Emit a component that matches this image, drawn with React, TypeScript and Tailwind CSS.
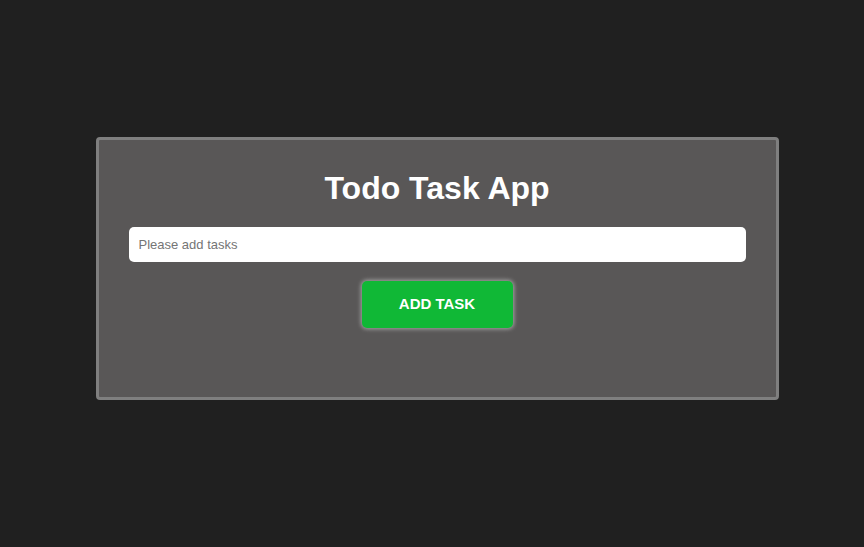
const App = () => {
  return (
    <div className="min-h-screen w-full bg-[#202020] pt-[137px] pl-[10px] flex justify-center items-start font-['Liberation_Sans',Arial,sans-serif]">
      <div className="w-[683px] h-[263px] bg-[#595757] border-[3px] border-[#7f7f7f] rounded-[4px] px-[30px] pt-[30px] flex flex-col items-center">
        <h1 className="text-white font-bold text-[32px] leading-[37px]">Todo Task App</h1>
        <input
          type="text"
          placeholder="Please add tasks"
          className="mt-[20px] w-full h-[35px] bg-white rounded-[5px] px-[10px] text-[13px] text-black placeholder:text-[#757575] outline-none"
        />
        <button className="mt-[19px] w-[151px] h-[47px] bg-[#10b836] rounded-[5px] text-white font-bold text-[15px] shadow-[0_0_4px_1px_rgba(220,220,220,0.6)]">
          ADD TASK
        </button>
      </div>
    </div>
  );
};

export default App;
